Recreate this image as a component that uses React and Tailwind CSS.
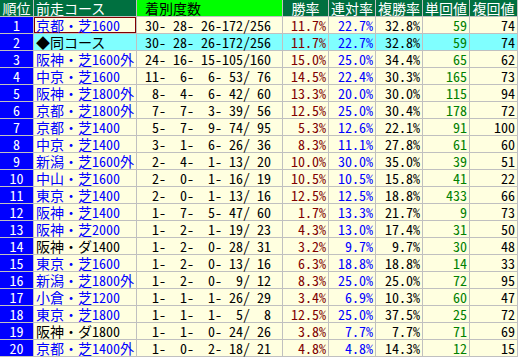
const rows = [
  [1, '京都・芝1600', '30- 28- 26-172/256', '11.7%', '22.7%', '32.8%', 59, 74],
  [2, '◆同コース', '30- 28- 26-172/256', '11.7%', '22.7%', '32.8%', 59, 74],
  [3, '阪神・芝1600外', '24- 16- 15-105/160', '15.0%', '25.0%', '34.4%', 65, 62],
  [4, '中京・芝1600', '11-  6-  6- 53/ 76', '14.5%', '22.4%', '30.3%', 165, 73],
  [5, '阪神・芝1800外', ' 8-  4-  6- 42/ 60', '13.3%', '20.0%', '30.0%', 115, 94],
  [6, '京都・芝1800外', ' 7-  7-  3- 39/ 56', '12.5%', '25.0%', '30.4%', 178, 72],
  [7, '京都・芝1400', ' 5-  7-  9- 74/ 95', '5.3%', '12.6%', '22.1%', 91, 100],
  [8, '中京・芝1400', ' 3-  1-  6- 26/ 36', '8.3%', '11.1%', '27.8%', 61, 60],
  [9, '新潟・芝1600外', ' 2-  4-  1- 13/ 20', '10.0%', '30.0%', '35.0%', 39, 51],
  [10, '中山・芝1600', ' 2-  0-  1- 16/ 19', '10.5%', '10.5%', '15.8%', 41, 22],
  [11, '東京・芝1400', ' 2-  0-  1- 13/ 16', '12.5%', '12.5%', '18.8%', 433, 66],
  [12, '阪神・芝1400', ' 1-  7-  5- 47/ 60', '1.7%', '13.3%', '21.7%', 9, 73],
  [13, '阪神・芝2000', ' 1-  2-  1- 19/ 23', '4.3%', '13.0%', '17.4%', 31, 50],
  [14, '阪神・ダ1400', ' 1-  2-  0- 28/ 31', '3.2%', '9.7%', '9.7%', 30, 48],
  [15, '東京・芝1600', ' 1-  2-  0- 13/ 16', '6.3%', '18.8%', '18.8%', 14, 33],
  [16, '新潟・芝1800外', ' 1-  2-  0-  9/ 12', '8.3%', '25.0%', '25.0%', 72, 95],
  [17, '小倉・芝1200', ' 1-  1-  1- 26/ 29', '3.4%', '6.9%', '10.3%', 60, 47],
  [18, '東京・芝1800', ' 1-  1-  1-  5/  8', '12.5%', '25.0%', '37.5%', 25, 72],
  [19, '阪神・ダ1800', ' 1-  1-  0- 24/ 26', '3.8%', '7.7%', '7.7%', 71, 69],
  [20, '京都・芝1400外', ' 1-  0-  2- 18/ 21', '4.8%', '4.8%', '14.3%', 12, 15],
];

const head = 'flex items-center justify-center bg-[#007040] text-white';

export default function App() {
  return (
    <div className="w-[518px] h-[359px] bg-white">
      <div
        className="grid grid-cols-[33px_102px_145px_45px_46px_46px_46px_47px] auto-rows-[16px] gap-px bg-[#c0c0c0] pr-px pb-px w-[518px] text-[14px] leading-[16px] whitespace-pre [font-feature-settings:'hwid'] overflow-hidden"
        style={{ fontFamily: '"Noto Sans CJK JP", sans-serif' }}
      >
        <div className={head}>順位</div>
        <div className="flex items-center bg-[#007040] pl-[2px] text-white">前走コース</div>
        <div className="flex items-center bg-[#00ff00] pl-2 text-black">着別度数</div>
        <div className={head}>勝率</div>
        <div className={head}>連対率</div>
        <div className={head}>複勝率</div>
        <div className={head}>単回値</div>
        <div className={head}>複回値</div>

        {rows.map(([rank, course, record, win, place, show, tan, fuku]) => {
          const bg = rank === 2 ? 'bg-[#80ffff]' : 'bg-[#ffffe0]';
          const nameColor = course.includes('ダ') || course.startsWith('◆') ? 'text-black' : 'text-[#0000ff]';
          const num = `flex items-center justify-end pr-[2px] ${bg}`;
          return [
            <div key={`r${rank}`} className="flex items-center justify-center bg-[#0000ff] text-white">
              {rank}
            </div>,
            <div
              key={`c${rank}`}
              className={`flex items-center pl-[2px] ${bg} ${nameColor} ${rank === 1 ? 'ring-1 ring-inset ring-[#800000]' : ''}`}
            >
              {course}
            </div>,
            <div key={`d${rank}`} className={`flex items-center pl-2 text-black ${bg}`}>
              {record}
            </div>,
            <div key={`w${rank}`} className={`${num} text-[#800000]`}>{win}</div>,
            <div key={`p${rank}`} className={`${num} text-[#0000ff]`}>{place}</div>,
            <div key={`s${rank}`} className={`${num} text-black`}>{show}</div>,
            <div key={`t${rank}`} className={`${num} text-[#008000]`}>{tan}</div>,
            <div key={`f${rank}`} className={`${num} text-black`}>{fuku}</div>,
          ];
        })}
      </div>
    </div>
  );
}
